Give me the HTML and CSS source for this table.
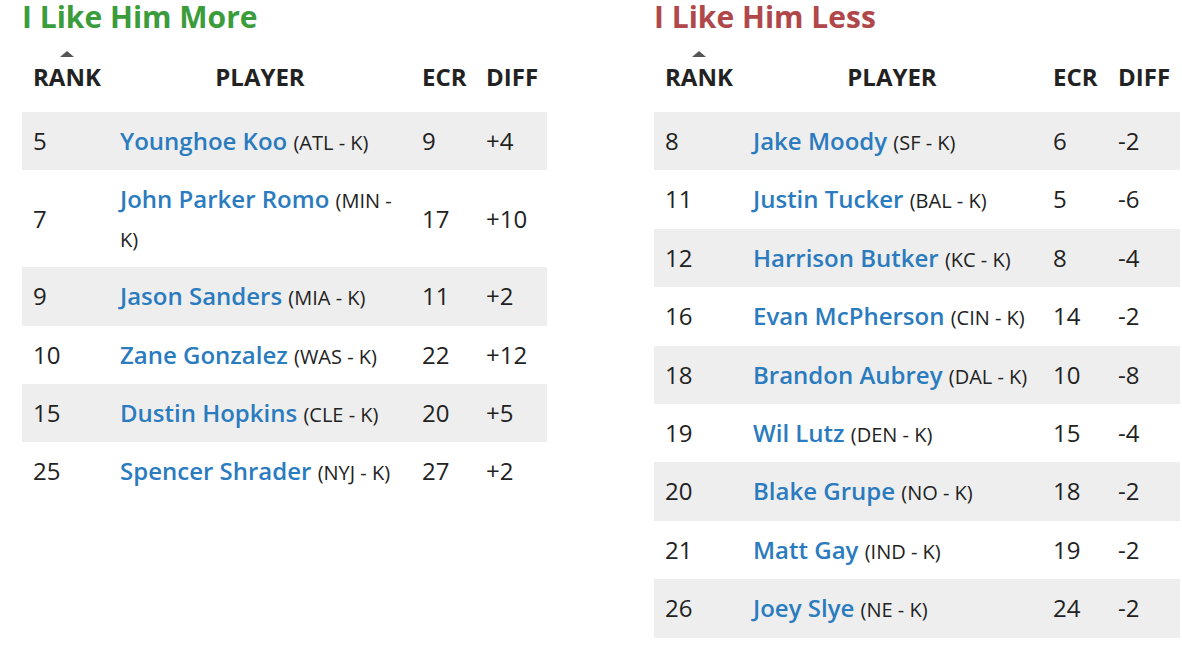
FILE: index.html
```html
<!DOCTYPE html>
<html lang="en">
<head>
    <meta charset="UTF-8">
    <meta name="viewport" content="width=device-width, initial-scale=1.0">
    <title>Kicker Rankings vs ECR</title>
    <link rel="stylesheet" href="styles.css">
</head>
<body>
    <div class="compare">
        <section class="panel">
            <h2 class="panel-title more">I Like Him More</h2>
            <table class="rank-table">
                <colgroup>
                    <col class="col-rank">
                    <col class="col-player">
                    <col class="col-ecr">
                    <col class="col-diff">
                </colgroup>
                <thead>
                    <tr>
                        <th><span class="sorted">RANK</span></th>
                        <th class="player-head">PLAYER</th>
                        <th>ECR</th>
                        <th>DIFF</th>
                    </tr>
                </thead>
                <tbody>
                    <tr>
                        <td>5</td>
                        <td><a href="#">Younghoe Koo</a> <span class="team">(ATL - K)</span></td>
                        <td>9</td>
                        <td>+4</td>
                    </tr>
                    <tr>
                        <td>7</td>
                        <td><a href="#">John Parker Romo</a> <span class="team">(MIN - K)</span></td>
                        <td>17</td>
                        <td>+10</td>
                    </tr>
                    <tr>
                        <td>9</td>
                        <td><a href="#">Jason Sanders</a> <span class="team">(MIA - K)</span></td>
                        <td>11</td>
                        <td>+2</td>
                    </tr>
                    <tr>
                        <td>10</td>
                        <td><a href="#">Zane Gonzalez</a> <span class="team">(WAS - K)</span></td>
                        <td>22</td>
                        <td>+12</td>
                    </tr>
                    <tr>
                        <td>15</td>
                        <td><a href="#">Dustin Hopkins</a> <span class="team">(CLE - K)</span></td>
                        <td>20</td>
                        <td>+5</td>
                    </tr>
                    <tr>
                        <td>25</td>
                        <td><a href="#">Spencer Shrader</a> <span class="team">(NYJ - K)</span></td>
                        <td>27</td>
                        <td>+2</td>
                    </tr>
                </tbody>
            </table>
        </section>

        <section class="panel">
            <h2 class="panel-title less">I Like Him Less</h2>
            <table class="rank-table wide">
                <colgroup>
                    <col class="col-rank">
                    <col class="col-player">
                    <col class="col-ecr">
                    <col class="col-diff">
                </colgroup>
                <thead>
                    <tr>
                        <th><span class="sorted">RANK</span></th>
                        <th class="player-head">PLAYER</th>
                        <th>ECR</th>
                        <th>DIFF</th>
                    </tr>
                </thead>
                <tbody>
                    <tr>
                        <td>8</td>
                        <td><a href="#">Jake Moody</a> <span class="team">(SF - K)</span></td>
                        <td>6</td>
                        <td>-2</td>
                    </tr>
                    <tr>
                        <td>11</td>
                        <td><a href="#">Justin Tucker</a> <span class="team">(BAL - K)</span></td>
                        <td>5</td>
                        <td>-6</td>
                    </tr>
                    <tr>
                        <td>12</td>
                        <td><a href="#">Harrison Butker</a> <span class="team">(KC - K)</span></td>
                        <td>8</td>
                        <td>-4</td>
                    </tr>
                    <tr>
                        <td>16</td>
                        <td><a href="#">Evan McPherson</a> <span class="team">(CIN - K)</span></td>
                        <td>14</td>
                        <td>-2</td>
                    </tr>
                    <tr>
                        <td>18</td>
                        <td><a href="#">Brandon Aubrey</a> <span class="team">(DAL - K)</span></td>
                        <td>10</td>
                        <td>-8</td>
                    </tr>
                    <tr>
                        <td>19</td>
                        <td><a href="#">Wil Lutz</a> <span class="team">(DEN - K)</span></td>
                        <td>15</td>
                        <td>-4</td>
                    </tr>
                    <tr>
                        <td>20</td>
                        <td><a href="#">Blake Grupe</a> <span class="team">(NO - K)</span></td>
                        <td>18</td>
                        <td>-2</td>
                    </tr>
                    <tr>
                        <td>21</td>
                        <td><a href="#">Matt Gay</a> <span class="team">(IND - K)</span></td>
                        <td>19</td>
                        <td>-2</td>
                    </tr>
                    <tr>
                        <td>26</td>
                        <td><a href="#">Joey Slye</a> <span class="team">(NE - K)</span></td>
                        <td>24</td>
                        <td>-2</td>
                    </tr>
                </tbody>
            </table>
        </section>
    </div>
</body>
</html>
```

FILE: styles.css
```css
body {
    font-family: 'Open Sans', 'Liberation Sans', Arial, sans-serif;
    margin: 0;
    padding: 0;
    background-color: #fff;
    color: #222;
}

.compare {
    display: grid;
    grid-template-columns: 525px 526px;
    column-gap: 107px;
    padding: 0 22px;
}

.panel-title {
    font-size: 30px;
    font-weight: 700;
    line-height: 34px;
    margin: 0;
}

.panel-title.more {
    color: #3b9c3b;
}

.panel-title.less {
    color: #b0474b;
}

.rank-table {
    width: 100%;
    border-collapse: collapse;
    table-layout: fixed;
    font-size: 24px;
}

.col-rank {
    width: 87px;
}

.col-ecr {
    width: 64px;
}

.col-diff {
    width: 72px;
}

.wide .col-rank {
    width: 88px;
}

.wide .col-ecr {
    width: 65px;
}

.wide .col-diff {
    width: 73px;
}

.rank-table th {
    text-align: left;
    font-weight: 700;
    line-height: 38px;
    padding: 24px 11px 16px;
    white-space: nowrap;
}

.rank-table th.player-head {
    text-align: center;
}

.sorted {
    position: relative;
}

.sorted::before {
    content: "";
    position: absolute;
    top: -9px;
    left: 50%;
    margin-left: -7px;
    border-left: 7px solid transparent;
    border-right: 7px solid transparent;
    border-bottom: 6px solid #555;
}

.rank-table td {
    line-height: 38.4px;
    padding: 10px 11px;
    vertical-align: middle;
}

.rank-table tbody tr:nth-child(odd) {
    background-color: #eee;
}

.rank-table a {
    color: #2b7bbf;
    font-weight: 600;
    text-decoration: none;
}

.team {
    font-size: 20px;
    line-height: 1;
}
```
